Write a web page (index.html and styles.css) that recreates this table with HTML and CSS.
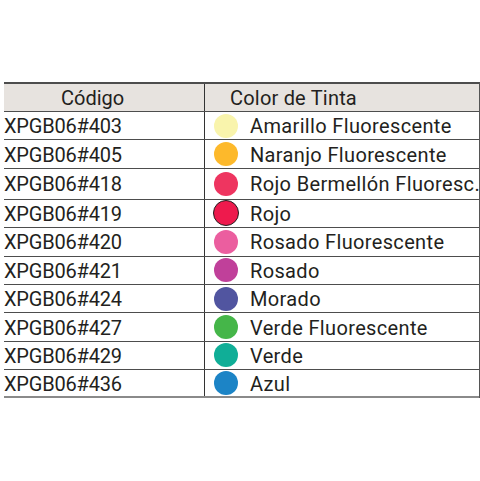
FILE: index.html
```html
<!DOCTYPE html>
<html lang="es">
<head>
<meta charset="utf-8">
<title>Colores de Tinta</title>
<link rel="stylesheet" href="styles.css">
</head>
<body>
<div class="page">
  <div class="ink">
    <div class="row head"><div class="cell code-h">Código</div><div class="cell color-h">Color de Tinta</div></div>
    <div class="row"><div class="cell code">XPGB06#403</div><div class="cell color"><span class="dot amarillo"></span>Amarillo Fluorescente</div></div>
    <div class="row"><div class="cell code">XPGB06#405</div><div class="cell color"><span class="dot naranjo"></span>Naranjo Fluorescente</div></div>
    <div class="row tall"><div class="cell code">XPGB06#418</div><div class="cell color"><span class="dot bermellon"></span>Rojo Bermellón Fluoresc.</div></div>
    <div class="row"><div class="cell code">XPGB06#419</div><div class="cell color"><span class="dot rojo"></span>Rojo</div></div>
    <div class="row"><div class="cell code">XPGB06#420</div><div class="cell color"><span class="dot rosafl"></span>Rosado Fluorescente</div></div>
    <div class="row"><div class="cell code">XPGB06#421</div><div class="cell color"><span class="dot rosado"></span>Rosado</div></div>
    <div class="row"><div class="cell code">XPGB06#424</div><div class="cell color"><span class="dot morado"></span>Morado</div></div>
    <div class="row"><div class="cell code">XPGB06#427</div><div class="cell color"><span class="dot verdefl"></span>Verde Fluorescente</div></div>
    <div class="row"><div class="cell code">XPGB06#429</div><div class="cell color"><span class="dot verde"></span>Verde</div></div>
    <div class="row last"><div class="cell code">XPGB06#436</div><div class="cell color"><span class="dot azul"></span>Azul</div></div>
  </div>
</div>
</body>
</html>
```
FILE: styles.css
```css
html, body {
  margin: 0;
  padding: 0;
  background: #ffffff;
}
.page {
  padding: 82px 1px 0 4px;
  font-family: Roboto, "Liberation Sans", sans-serif;
  color: #231f20;
}
.ink {
  width: 475px;
  font-size: 20px;
  border-top: 2px solid #4d4d4d;
  border-right: 1px solid #555;
}
.row {
  display: grid;
  grid-template-columns: 201px 1fr;
  height: 28.4px;
  box-sizing: border-box;
  border-bottom: 1px solid #4d4d4d;
}
.row.head {
  height: 28px;
  background: #e7e3df;
}
.row.tall {
  height: 31px;
}
.row.last {
  height: 28px;
  border-bottom: 2px solid #8a8a8a;
}
.cell {
  display: flex;
  align-items: center;
  white-space: nowrap;
  overflow: hidden;
  padding-top: 1px;
}
.code-h {
  padding-left: 57px;
  border-right: 1px solid #333;
}
.color-h {
  padding-left: 25px;
  letter-spacing: 0.2px;
}
.code {
  border-right: 1px solid #333;
  letter-spacing: -0.2px;
}
.color {
  padding-left: 9px;
  letter-spacing: 0.35px;
}
.dot {
  width: 24px;
  height: 24px;
  border-radius: 50%;
  flex: none;
  margin-right: 12px;
  margin-top: -1px;
  box-sizing: border-box;
}
.amarillo { background: #f9f4ac; }
.naranjo { background: #fdb92b; }
.bermellon { background: #ee3560; }
.rojo { background: #ee1a4d; border: 1.5px solid #231f20; width: 26px; height: 26px; margin-left: -1px; margin-right: 11px; }
.rosafl { background: #eb5e9f; }
.rosado { background: #c0409a; }
.morado { background: #5155a0; }
.verdefl { background: #45b649; }
.verde { background: #10ae97; }
.azul { background: #1c84c6; }
```
